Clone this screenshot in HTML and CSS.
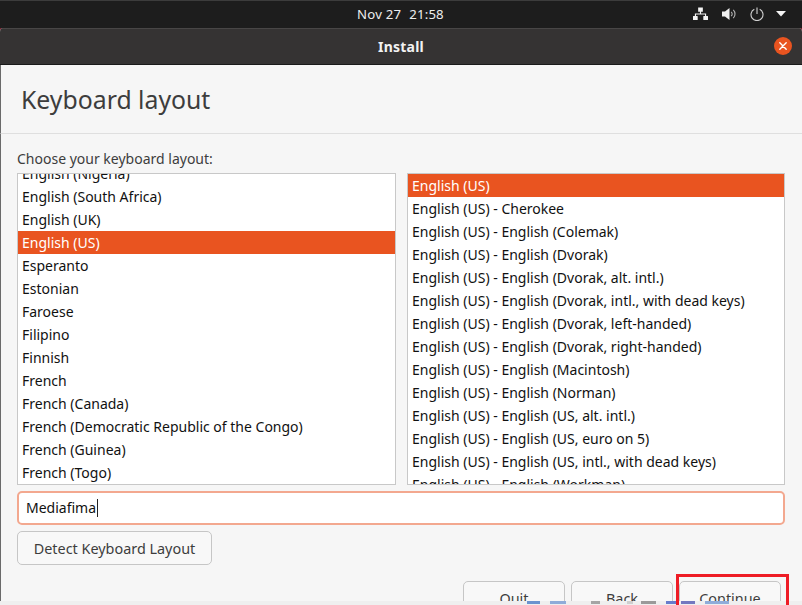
FILE: index.html
```html
<!DOCTYPE html>
<html lang="en">
<head>
<meta charset="utf-8">
<title>Install</title>
<link rel="stylesheet" href="styles.css">
</head>
<body>
<div class="stage">
  <header class="topbar">
    <div class="clock"><span>Nov 27</span><span>21:58</span></div>
    <div class="tray">
      <svg class="ic-net" width="15" height="14" viewBox="0 0 16 14"><path fill="#f4f4f4" d="M5.5 0h5v4.500H8.600V6.500H14V9h1.500a.5.5 0 0 1 .5.5V13a.5.5 0 0 1-.5.5h-4a.5.5 0 0 1-.5-.5V9.500a.5.5 0 0 1 .5-.5h1.300V7.500H3.200V9H4.500a.5.5 0 0 1 .5.5V13a.5.5 0 0 1-.5.5h-4A.5.5 0 0 1 0 13V9.500A.5.5 0 0 1 .5 9H2V6.500h5.400V4.500H5.500z"/></svg>
      <svg class="ic-vol" width="15" height="14" viewBox="0 0 15 14"><path fill="#f0f0f0" d="M0 4.500h3L7.500 1v12L3 9.500H0z"/><path fill="none" stroke="#b5b5b5" stroke-width="1.100" d="M9.200 4.800a3 3 0 0 1 0 4.400M11.300 2.800a6 6 0 0 1 0 8.400"/></svg>
      <svg class="ic-pow" width="14" height="14" viewBox="0 0 14 14"><path fill="none" stroke="#d2d2d2" stroke-width="1.100" d="M4.300 2.200a6 6 0 1 0 5.400 0M7 .5v6.500"/></svg>
      <svg class="ic-car" width="10" height="6" viewBox="0 0 10 6"><path fill="#f4f4f4" d="M0 0h10L5 5.500z"/></svg>
    </div>
  </header>
  <div class="window">
    <div class="titlebar">
      <span class="wintitle">Install</span>
      <span class="close"><svg width="18" height="18" viewBox="0 0 18 18"><circle cx="9" cy="9" r="9" fill="#e95420"/><path stroke="#fff" stroke-width="1.400" stroke-linecap="round" d="M5.800 5.800l6.400 6.400M12.200 5.800l-6.400 6.400"/></svg></span>
    </div>
    <div class="pagehead"><h1>Keyboard layout</h1></div>
    <main class="content">
      <div class="label">Choose your keyboard layout:</div>
      <div class="lists">
        <div class="list list-left">
          <div class="row">English (Nigeria)</div>
          <div class="row">English (South Africa)</div>
          <div class="row">English (UK)</div>
          <div class="row sel">English (US)</div>
          <div class="row">Esperanto</div>
          <div class="row">Estonian</div>
          <div class="row">Faroese</div>
          <div class="row">Filipino</div>
          <div class="row">Finnish</div>
          <div class="row">French</div>
          <div class="row">French (Canada)</div>
          <div class="row">French (Democratic Republic of the Congo)</div>
          <div class="row">French (Guinea)</div>
          <div class="row">French (Togo)</div>
        </div>
        <div class="list">
          <div class="row sel">English (US)</div>
          <div class="row">English (US) - Cherokee</div>
          <div class="row">English (US) - English (Colemak)</div>
          <div class="row">English (US) - English (Dvorak)</div>
          <div class="row">English (US) - English (Dvorak, alt. intl.)</div>
          <div class="row">English (US) - English (Dvorak, intl., with dead keys)</div>
          <div class="row">English (US) - English (Dvorak, left-handed)</div>
          <div class="row">English (US) - English (Dvorak, right-handed)</div>
          <div class="row">English (US) - English (Macintosh)</div>
          <div class="row">English (US) - English (Norman)</div>
          <div class="row">English (US) - English (US, alt. intl.)</div>
          <div class="row">English (US) - English (US, euro on 5)</div>
          <div class="row">English (US) - English (US, intl., with dead keys)</div>
          <div class="row">English (US) - English (Workman)</div>
        </div>
      </div>
      <div class="entry"><span>Mediafima</span><i class="caret"></i></div>
      <button class="btn btn-detect">Detect Keyboard Layout</button>
      <div class="actions">
        <button class="btn btn-act">Quit</button>
        <button class="btn btn-act">Back</button>
        <button class="btn btn-act">Continue</button>
      </div>
    </main>
  </div>
  <div class="strip">
    <i class="bit b1"></i><i class="bit b2"></i><i class="bit b3"></i><i class="bit b4"></i><i class="bit b5"></i><i class="bit b6"></i><i class="bit b7"></i><i class="bit b8"></i>
  </div>
  <div class="redbox"></div>
</div>
</body>
</html>
```

FILE: styles.css
```css
* { box-sizing: border-box; }
html, body { margin: 0; padding: 0; }
body { font-family: "Noto Sans", "Open Sans", sans-serif; background: #7a2030; }
.stage { position: relative; width: 802px; height: 605px; overflow: hidden; display: flex; flex-direction: column; background: #7a2030; }

.topbar { height: 28px; flex: none; background: #1d1d1d; border-top: 1px solid #3c3c3c; position: relative; display: flex; justify-content: flex-end; align-items: center; color: #f2f2f2; }
.clock { position: absolute; left: 357px; top: 4px; font-size: 13.2px; line-height: 18px; display: flex; gap: 8px; color: #eeeeee; letter-spacing: 0.2px; }
.tray { display: flex; align-items: center; padding-right: 16px; padding-bottom: 2px; }
.ic-net { margin-right: 14px; }
.ic-vol { margin-right: 13px; }
.ic-pow { margin-right: 12px; }

.window { flex: 1; min-height: 0; display: flex; flex-direction: column; border-radius: 4px 4px 0 0; overflow: hidden; background: #f6f6f6; }
.titlebar { height: 37px; flex: none; background: #353333; border-top: 1px solid #484646; border-bottom: 1px solid #1a1a1a; display: flex; align-items: center; justify-content: center; position: relative; color: #f2f2f2; }
.wintitle { font-size: 14px; font-weight: 700; letter-spacing: 0.2px; }
.close { position: absolute; right: 10px; top: 8px; width: 18px; height: 18px; }
.close svg { display: block; }

.pagehead { height: 69px; flex: none; border-left: 1px solid #6a6a6a; border-bottom: 1px solid #dfdfdf; padding: 15px 0 0 20px; }
h1 { margin: 0; font-size: 24.8px; line-height: 38px; font-weight: 400; color: #3d3d3d; }

.content { flex: 1; min-height: 0; border-left: 1px solid #6a6a6a; padding: 15px 17px 0 16px; position: relative; display: flex; flex-direction: column; }
.label { flex: none; font-size: 14px; line-height: 19px; color: #3d3d3d; height: 24px; }
.lists { display: flex; gap: 11px; height: 312px; flex: none; }
.list { width: 378px; height: 312px; background: #fff; border: 1px solid #c8c8c8; overflow: hidden; }
.list-left { width: 379px; }
.list-left .row:first-child { margin-top: -12px; }
.row { height: 23px; line-height: 23px; padding-left: 4px; font-size: 14px; color: #111; white-space: nowrap; }
.row.sel { background: #e95420; color: #fff; }

.entry { flex: none; margin-top: 6px; height: 34px; width: 768px; background: #fff; border: 2px solid #f3a88f; border-radius: 5px; padding-left: 7px; font-size: 14px; line-height: 30px; color: #111; display: flex; align-items: center; }
.caret { display: block; width: 1px; height: 18px; background: #222; margin-left: 1px; }

.btn { font-family: inherit; font-size: 14.4px; color: #3d3d3d; background: #f8f8f8; border: 1px solid #c6c6c6; border-radius: 5px; height: 34px; padding: 0; }
.btn-detect { margin-top: 6px; width: 195px; flex: none; }
.actions { display: flex; gap: 6px; justify-content: flex-end; margin-top: 16px; padding-right: 4px; flex: none; }
.btn-act { width: 102px; }

.strip { position: absolute; left: 0; right: 0; bottom: 0; height: 4px; background: #efefef; }
.bit { position: absolute; top: 0; height: 3px; display: block; opacity: .75; }
.b1 { left: 527px; width: 13px; background: #3f74c4; }
.b2 { left: 550px; width: 16px; background: #6f96d2; }
.b3 { left: 591px; width: 9px; background: #8c8c8c; }
.b4 { left: 627px; width: 6px; background: #c4c4c4; }
.b5 { left: 641px; width: 15px; background: #7e7e7e; }
.b6 { left: 666px; width: 13px; background: #3a55c0; }
.b7 { left: 681px; width: 14px; background: #4a50b0; }
.b8 { left: 705px; width: 24px; background: #6f96d2; }

.redbox { position: absolute; left: 676px; top: 574px; width: 113px; height: 40px; border: 3px solid #ee1c25; }
```
